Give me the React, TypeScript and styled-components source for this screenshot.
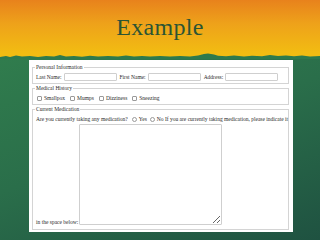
import React from 'react';
import styled, { createGlobalStyle } from 'styled-components';

const GlobalStyle = createGlobalStyle`
  html, body {
    margin: 0;
    padding: 0;
    width: 320px;
    height: 240px;
    overflow: hidden;
  }
`;

const App: React.FC = () => {
  return (
    <>
      <GlobalStyle />
      <Slide>
        <Header>
          <Title>Example</Title>
        </Header>
        <Grass viewBox="0 0 320 6" preserveAspectRatio="none">
          <path
            d="M0 4 L6 3 L10 4 L16 2.5 L22 3.5 L30 3 L38 4 L46 3 L54 3.5 L60 2 L66 3.5 L74 3 L82 3.8 L90 2.8 L98 3.5 L108 3 L118 3.6 L126 2.6 L134 3.4 L142 3 L150 3.6 L160 3 L170 3.4 L180 3 L190 3.6 L198 2.4 L204 1 L208 0.5 L214 1.5 L218 2.8 L226 3.2 L234 2.6 L244 3.4 L252 2.8 L262 3.2 L270 2 L278 3 L286 2.4 L294 3.2 L302 2.6 L310 3.4 L320 3 L320 6 L0 6 Z"
            fill="#2e7a4c"
          />
        </Grass>
        <Body>
          <Panel>
            <Group>
              <Legend>Personal Information</Legend>
              <Row>
                <Label>Last Name:</Label>
                <TextBox />
                <Label>First Name:</Label>
                <TextBox />
                <Label>Address:</Label>
                <TextBox />
              </Row>
            </Group>
            <Group>
              <Legend>Medical History</Legend>
              <Row>
                {['Smallpox', 'Mumps', 'Dizziness', 'Sneezing'].map((item) => (
                  <Option key={item} $space={2}>
                    <Check />
                    {item}
                  </Option>
                ))}
              </Row>
            </Group>
            <Group $grow>
              <Legend>Current Medication</Legend>
              <Row>
                <Question>Are you currently taking any medication?</Question>
                <Option $space={1}>
                  <Radio />
                  Yes
                </Option>
                <Option $space={0}>
                  <Radio />
                  No If you are currently taking medication, please indicate it
                </Option>
              </Row>
              <NoteRow>
                <NoteLabel>in the space below:</NoteLabel>
                <Notes />
              </NoteRow>
            </Group>
          </Panel>
        </Body>
      </Slide>
    </>
  );
};

const Slide = styled.div`
  width: 320px;
  height: 240px;
  display: flex;
  flex-direction: column;
  background: #215a42;
`;

const Header = styled.div`
  height: 53px;
  display: flex;
  justify-content: center;
  align-items: center;
  background: linear-gradient(180deg, #e8821c 0%, #eea21a 45%, #f2bc12 100%);
`;

const Title = styled.h1`
  margin: 2px 0 0;
  font-family: 'Liberation Serif', 'DejaVu Serif', serif;
  font-weight: normal;
  font-size: 24px;
  letter-spacing: 0.3px;
  color: #2b5434;
`;

const Grass = styled.svg`
  display: block;
  width: 320px;
  height: 6px;
  background: #f2bc12;
`;

const Body = styled.div`
  flex: 1;
  padding: 1px 27px 8px 29px;
  background: linear-gradient(160deg, #307c4d 0%, #2a6e4a 45%, #1f5241 100%);
`;

const Panel = styled.div`
  height: 172px;
  box-sizing: border-box;
  padding: 4px 4px 3px 3px;
  background: #fff;
  display: flex;
  flex-direction: column;
  gap: 1px;
  font-family: 'Liberation Serif', serif;
  font-size: 5.5px;
  color: #2a2a2a;
`;

const Group = styled.fieldset<{ $grow?: boolean }>`
  margin: 0;
  padding: 0 2px 2px 3px;
  border: 1px solid #d4d4d4;
  min-width: 0;
  ${({ $grow }) => ($grow ? 'flex: 1; padding-bottom: 4px;' : '')}
`;

const Legend = styled.legend`
  padding: 0 1px;
  margin-left: -1px;
  line-height: 7px;
`;

const Row = styled.div`
  display: flex;
  align-items: center;
  gap: 2px;
  margin-top: 2px;
  line-height: 8px;
  white-space: nowrap;
`;

const Label = styled.span`
  white-space: nowrap;
`;

const Question = styled.span`
  margin-right: 2px;
  white-space: nowrap;
`;

const TextBox = styled.span`
  display: inline-block;
  width: 51px;
  height: 6px;
  margin-right: 1px;
  border: 1px solid #cfcfcf;
  border-radius: 1px;
  background: #fff;
`;

const Option = styled.label<{ $space: number }>`
  display: inline-flex;
  align-items: center;
  gap: 2px;
  margin-right: ${({ $space }) => $space}px;
`;

const Check = styled.span`
  width: 3px;
  height: 3px;
  border: 1px solid #9a9a9a;
  border-radius: 1px;
  margin-left: 1px;
`;

const Radio = styled.span`
  width: 3px;
  height: 3px;
  border: 1px solid #9a9a9a;
  border-radius: 50%;
`;

const NoteRow = styled.div`
  display: flex;
  align-items: flex-end;
  gap: 1px;
  margin-top: 1px;
`;

const NoteLabel = styled.span`
  line-height: 5px;
  white-space: nowrap;
`;

const Notes = styled.textarea`
  width: 143px;
  height: 101px;
  box-sizing: border-box;
  padding: 0;
  border: 1px solid #cfcfcf;
  border-radius: 1px;
  font-size: 6px;
`;

export default App;
